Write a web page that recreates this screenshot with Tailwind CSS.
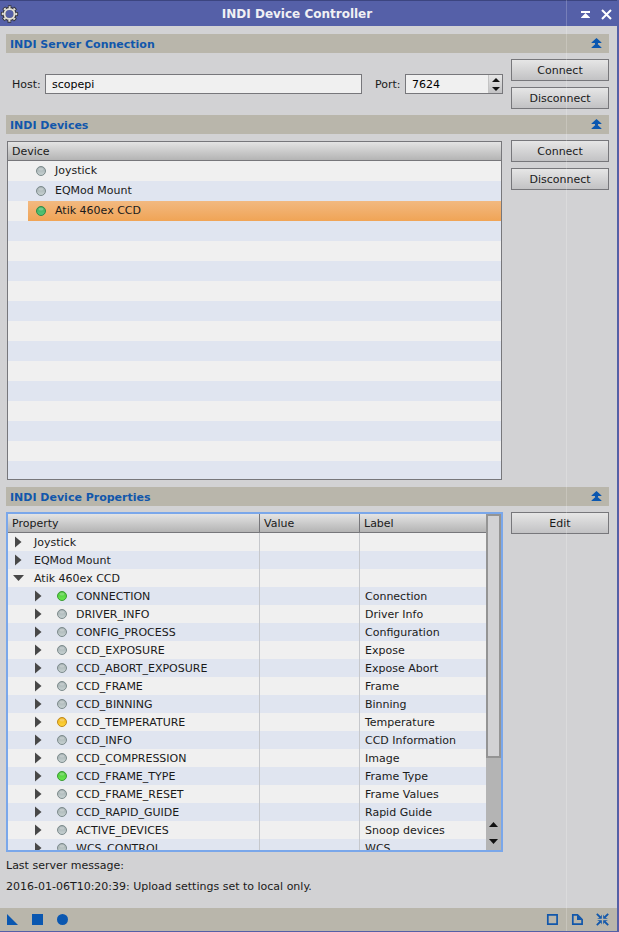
<!DOCTYPE html>
<html lang="en">
<head>
<meta charset="utf-8">
<meta name="viewport" content="width=device-width, initial-scale=1">
<title>INDI Device Controller</title>
<script src="https://cdn.jsdelivr.net/npm/@tailwindcss/browser@4"></script>
</head>
<body class="bg-[#d2d2d4] font-['DejaVu_Sans','Liberation_Sans',sans-serif] text-[11px] leading-[18px] text-[#1a1a1a]">
<svg class="absolute size-0" aria-hidden="true">
  <defs>
    <linearGradient id="grey" x1="0" y1="0" x2="0" y2="1"><stop offset="0" stop-color="#9fabad"/><stop offset="1" stop-color="#c9d3d3"/></linearGradient>
    <linearGradient id="green" x1="0" y1="0" x2="0" y2="1"><stop offset="0" stop-color="#4cc43c"/><stop offset="1" stop-color="#6aea50"/></linearGradient>
    <linearGradient id="teal" x1="0" y1="0" x2="0" y2="1"><stop offset="0" stop-color="#3fae5c"/><stop offset="1" stop-color="#55c678"/></linearGradient>
    <linearGradient id="amber" x1="0" y1="0" x2="0" y2="1"><stop offset="0" stop-color="#eeb01c"/><stop offset="1" stop-color="#ffd83c"/></linearGradient>
    <symbol id="collapse" viewBox="0 0 12 12"><path fill="#0a57b0" d="M5.500 0 10.500 4.500V5H.5V4.500zM5.500 5 10.500 9.500V10H.5V9.500zM4 5H7V6H4z"/></symbol>
  </defs>
</svg>
<div class="relative flex min-h-screen flex-col border-r-2 border-b border-[#5560a6]">
  <header class="flex h-[26px] items-center border-t border-[#3c4580] bg-[#5560a8] text-[#f0f0f4]">
    <svg class="size-[19px]" viewBox="0 0 19 19" fill="none" aria-hidden="true">
      <circle cx="9.500" cy="10" r="5.200" stroke="#34343c" stroke-width="4"/>
      <path stroke="#34343c" stroke-width="3.400" stroke-dasharray="3.400 2.097" stroke-dashoffset="1.700" d="M9.500 3a7 7 0 1 1 0 14a7 7 0 1 1 0-14"/>
      <circle cx="9.500" cy="10" r="4" fill="#5560a8"/>
      <circle cx="9.500" cy="10" r="5" stroke="#e2e0d8" stroke-width="2"/>
      <path stroke="#e2e0d8" stroke-width="2" stroke-dasharray="2.200 3.083" stroke-dashoffset="1.100" d="M9.500 3.270a6.730 6.730 0 1 1 0 13.460a6.730 6.730 0 1 1 0-13.460"/>
    </svg>
    <h1 class="flex-1 text-center text-[12px] font-bold">INDI Device Controller</h1>
    <div class="mt-[2px] flex w-[42px] items-center justify-end gap-[10px] pr-[5px]">
      <button aria-label="Shade window"><svg class="block size-[11px]" viewBox="0 0 11 11"><path fill="#fff" d="M1 2H10V4H1zM5.500 4 10 8.500V9H1V8.500z"/></svg></button>
      <button aria-label="Close window"><svg class="block size-[11px]" viewBox="0 0 11 11"><path stroke="#fff" stroke-width="2" d="M1 1 10 10M10 1 1 10"/></svg></button>
    </div>
  </header>

  <main class="flex flex-col gap-[6px] pt-2 pr-2 pl-[6px]">
    <section class="flex flex-col gap-[6px]">
      <div class="flex h-[19px] items-center justify-between bg-[#b9b6ab] pr-[6px] pl-1">
        <h2 class="pt-[2px] text-[11px] font-bold text-[#1157ab]">INDI Server Connection</h2>
        <button aria-label="Collapse INDI Server Connection"><svg class="block size-3"><use href="#collapse"/></svg></button>
      </div>
      <div class="flex gap-2">
        <div class="flex flex-1 items-center pl-[6px]">
          <label for="host" class="w-[33px] pt-[2px]">Host:</label>
          <input id="host" value="scopepi" class="h-5 w-0 flex-1 border border-[#77777b] bg-[#f0f0f0] px-[6px] text-black outline-none">
          <label for="port" class="ml-[13px] w-[30px] pt-[2px]">Port:</label>
          <div class="flex h-5 w-[98px] border border-[#77777b] bg-[#f0f0f0]">
            <input id="port" inputmode="numeric" value="7624" class="w-0 flex-1 px-[6px] pt-[2px] text-black outline-none">
            <div class="flex w-[14px] flex-col border-l border-[#c4c4c4] bg-linear-to-b from-[#e6e6e6] to-[#c2c2c4]">
              <button id="up" aria-label="Increase port" class="flex flex-1 items-center justify-center"><svg class="h-1 w-2" viewBox="0 0 8 4"><path fill="#111" d="M0 4 4 0 8 4z"/></svg></button>
              <button id="down" aria-label="Decrease port" class="flex flex-1 items-center justify-center"><svg class="h-1 w-2" viewBox="0 0 8 4"><path fill="#111" d="M0 0 4 4 8 0z"/></svg></button>
            </div>
          </div>
        </div>
        <div class="flex w-[98px] flex-col gap-[6px]">
          <button class="h-[22px] border border-[#77777b] bg-linear-to-b from-[#e6e6e6] to-[#c2c2c4] pt-[2px]">Connect</button>
          <button class="h-[22px] border border-[#77777b] bg-linear-to-b from-[#e6e6e6] to-[#c2c2c4] pt-[2px]">Disconnect</button>
        </div>
      </div>
    </section>

    <section class="flex flex-col gap-[6px]">
      <div class="flex h-[19px] items-center justify-between bg-[#b9b6ab] pr-[6px] pl-1">
        <h2 class="pt-[2px] text-[11px] font-bold text-[#1157ab]">INDI Devices</h2>
        <button aria-label="Collapse INDI Devices"><svg class="block size-3"><use href="#collapse"/></svg></button>
      </div>
      <div class="flex gap-2">
        <div class="flex-1 px-px pt-px">
          <div class="h-[339px] overflow-hidden border border-[#77777b] bg-[#f0f0f0]">
            <table class="w-full table-fixed border-separate border-spacing-0">
              <thead><tr><th class="h-[19px] border-b border-[#77777b] bg-linear-to-b from-[#e4e4e4] to-[#b4b4b4] p-0 pt-[2px] pl-1 text-left leading-4 font-normal">Device</th></tr></thead>
              <tbody id="devices"></tbody>
            </table>
          </div>
        </div>
        <div class="flex w-[98px] flex-col gap-[6px]">
          <button class="h-[22px] border border-[#77777b] bg-linear-to-b from-[#e6e6e6] to-[#c2c2c4] pt-[2px]">Connect</button>
          <button class="h-[22px] border border-[#77777b] bg-linear-to-b from-[#e6e6e6] to-[#c2c2c4] pt-[2px]">Disconnect</button>
        </div>
      </div>
    </section>

    <section class="flex flex-col gap-[6px] pt-px">
      <div class="flex h-[19px] items-center justify-between bg-[#b9b6ab] pr-[6px] pl-1">
        <h2 class="pt-[2px] text-[11px] font-bold text-[#1157ab]">INDI Device Properties</h2>
        <button aria-label="Collapse INDI Device Properties"><svg class="block size-3"><use href="#collapse"/></svg></button>
      </div>
      <div class="flex items-start gap-2">
        <div class="flex h-[340px] flex-1 overflow-hidden border-2 border-[#7aa7ea] bg-[#f0f0f0]">
          <div class="flex-1 overflow-hidden">
            <table class="w-full table-fixed border-separate border-spacing-0">
              <colgroup><col class="w-[252px]"><col class="w-[100px]"><col></colgroup>
              <thead><tr>
                <th class="h-[19px] border-r border-b border-[#77777b] bg-linear-to-b from-[#e4e4e4] to-[#b4b4b4] p-0 pt-[2px] pl-1 text-left leading-4 font-normal">Property</th>
                <th class="h-[19px] border-r border-b border-[#77777b] bg-linear-to-b from-[#e4e4e4] to-[#b4b4b4] p-0 pt-[2px] pl-1 text-left leading-4 font-normal">Value</th>
                <th class="h-[19px] border-b border-[#77777b] bg-linear-to-b from-[#e4e4e4] to-[#b4b4b4] p-0 pt-[2px] pl-1 text-left leading-4 font-normal">Label</th>
              </tr></thead>
              <tbody id="properties"></tbody>
            </table>
          </div>
          <div class="flex w-[15px] flex-col bg-[#b4b4b4]">
            <div class="h-[244px] border-2 border-[#949494] bg-[#d2d2d4]"></div>
            <div class="mt-auto flex flex-col">
              <button aria-label="Scroll up" class="flex h-[17px] items-center justify-center"><svg class="h-[5px] w-[9px]" viewBox="0 0 9 5"><path fill="#111" d="M0 5 4.500 0 9 5z"/></svg></button>
              <button aria-label="Scroll down" class="flex h-[17px] items-center justify-center"><svg class="h-[5px] w-[9px]" viewBox="0 0 9 5"><path fill="#111" d="M0 0 4.500 5 9 0z"/></svg></button>
            </div>
          </div>
        </div>
        <button class="h-[22px] w-[98px] border border-[#77777b] bg-linear-to-b from-[#e6e6e6] to-[#c2c2c4] pt-[2px]">Edit</button>
      </div>
      <div class="flex flex-col gap-[3px] pb-3">
        <p class="-mt-px">Last server message:</p>
        <p>2016-01-06T10:20:39: Upload settings set to local only.</p>
      </div>
    </section>
  </main>

  <footer class="mt-auto flex h-[23px] items-center justify-between bg-[#b9b6ab] pr-2 pl-[6px]">
    <div class="flex gap-[13px]">
      <button aria-label="New instance"><svg class="block size-3" viewBox="0 0 12 12"><path fill="#0a57b0" d="M1 0 12 11H1z"/></svg></button>
      <button aria-label="Apply"><svg class="block size-3" viewBox="0 0 12 12"><path fill="#0a57b0" d="M1 0H12V11H1z"/></svg></button>
      <button aria-label="Apply globally"><svg class="block size-3" viewBox="0 0 12 12"><circle cx="6.500" cy="5.500" r="5.500" fill="#0a57b0"/></svg></button>
    </div>
    <div class="flex gap-[13px]">
      <button aria-label="Edit instance source"><svg class="block size-3" viewBox="0 0 12 12"><path fill="none" stroke="#1157ab" stroke-width="1.700" d="M1.800 .9H11.100V10.200H1.800z"/></svg></button>
      <button aria-label="Browse documentation"><svg class="block size-3" viewBox="0 0 12 12"><path fill="none" stroke="#1157ab" stroke-width="1.700" d="M1.800 .9H6.500L11.100 5.500V10.200H1.800z"/><path fill="#1157ab" d="M6 .9V6H11.200z"/></svg></button>
      <button aria-label="Reset"><svg class="block size-[13px]" viewBox="0 0 13 13"><path stroke="#1157ab" stroke-width="1.800" d="M.8.8 4.500 4.500M12.200.8 8.500 4.500M.8 12.200 4.500 8.500M12.200 12.200 8.500 8.500"/><path fill="#1157ab" d="M5.800 5.800V1.500L4.300 4.300 1 5.800zM7.200 5.800V1.500L8.700 4.300 12 5.800zM5.800 7.200V11.500L4.300 8.700 1 7.200zM7.200 7.200V11.500L8.700 8.700 12 7.200z"/></svg></button>
    </div>
  </footer>
  <div class="pointer-events-none absolute inset-y-0 right-[50px] w-px bg-white/20"></div>
</div>
<script>
const rims = { grey: '#7d8b8c', green: '#3c9c34', teal: '#2f8a4a', amber: '#c08a1c' };
const dot = c => `<svg class="size-[10px] shrink-0" viewBox="0 0 10 10" aria-hidden="true"><circle cx="5" cy="5" r="4.500" fill="url(#${c})" stroke="${rims[c]}"/><ellipse cx="5" cy="3" rx="2.500" ry="1.500" fill="#fff" fill-opacity=".25"/></svg>`;
const stripe = i => i % 2 ? 'bg-[#e0e5f0]' : 'bg-[#f0f0f0]';

const devices = [['Joystick', 'grey'], ['EQMod Mount', 'grey'], ['Atik 460ex CCD', 'teal']];
document.getElementById('devices').innerHTML = Array.from({ length: 16 }, (_, i) => {
  const d = devices[i];
  const selected = i === 2 ? 'bg-linear-to-b from-[#f2b980] to-[#f0a455]' : '';
  return `<tr class="${stripe(i)}"><td class="h-5 p-0 pl-5">${d ? `<div class="flex h-5 items-center gap-[9px] pl-2 ${selected}">${dot(d[1])}<span class="pb-px">${d[0]}</span></div>` : ''}</td></tr>`;
}).join('');

const properties = [
  ['Joystick'], ['EQMod Mount'], ['Atik 460ex CCD'],
  ['CONNECTION', 'Connection', 'green'], ['DRIVER_INFO', 'Driver Info', 'grey'],
  ['CONFIG_PROCESS', 'Configuration', 'grey'], ['CCD_EXPOSURE', 'Expose', 'grey'],
  ['CCD_ABORT_EXPOSURE', 'Expose Abort', 'grey'], ['CCD_FRAME', 'Frame', 'grey'],
  ['CCD_BINNING', 'Binning', 'grey'], ['CCD_TEMPERATURE', 'Temperature', 'amber'],
  ['CCD_INFO', 'CCD Information', 'grey'], ['CCD_COMPRESSION', 'Image', 'grey'],
  ['CCD_FRAME_TYPE', 'Frame Type', 'green'], ['CCD_FRAME_RESET', 'Frame Values', 'grey'],
  ['CCD_RAPID_GUIDE', 'Rapid Guide', 'grey'], ['ACTIVE_DEVICES', 'Snoop devices', 'grey'],
  ['WCS_CONTROL', 'WCS', 'grey']
];
const closed = '<svg class="block h-3 w-[11px]" viewBox="0 0 11 12"><path fill="#484848" d="M2 .5 8.500 6 2 11.500z"/></svg>';
const open = '<svg class="block h-3 w-[11px]" viewBox="0 0 11 12"><path fill="#484848" d="M0 3H11L5.500 9z"/></svg>';
document.getElementById('properties').innerHTML = properties.map(([name, label, state], i) =>
  `<tr class="${stripe(i)}">
    <td class="h-[18px] border-r border-[#c6c8cc] p-0"><div class="flex h-[18px] items-center ${state ? 'pl-[25px]' : 'pl-[5px]'}">
      <button class="${state ? 'mr-[13px]' : 'mr-[10px]'}" aria-label="Toggle ${name}" aria-expanded="${i === 2}">${i === 2 ? open : closed}</button>
      ${state ? dot(state) : ''}<span class="pt-[2px] ${state ? 'ml-[9px]' : ''}">${name}</span></div></td>
    <td class="border-r border-[#c6c8cc] p-0"></td>
    <td class="p-0 pt-[2px] pl-[5px] leading-4 whitespace-nowrap">${label || ''}</td>
  </tr>`).join('');

const port = document.getElementById('port');
document.getElementById('up').onclick = () => { port.value = +port.value + 1; };
document.getElementById('down').onclick = () => { port.value = +port.value - 1; };
</script>
</body>
</html>
